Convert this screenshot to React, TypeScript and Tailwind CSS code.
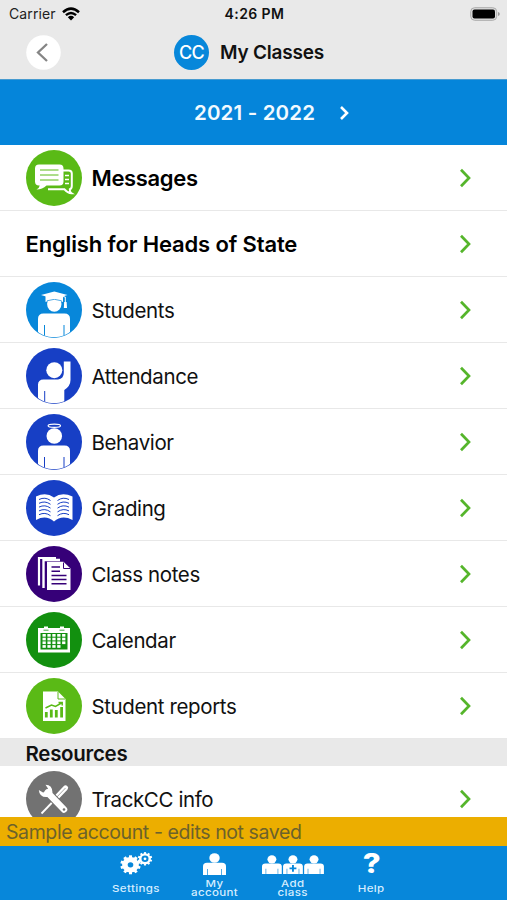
import type { ReactNode } from "react";

function Disc({ id, color, children }: { id: string; color: string; children: ReactNode }) {
  return (
    <svg viewBox="0 0 56 56" className="mt-[1.5px] h-[56px] w-[56px] shrink-0">
      <defs>
        <clipPath id={id}>
          <circle cx="28" cy="28" r="27.2" />
        </clipPath>
      </defs>
      <circle cx="28" cy="28" r="28" fill={color} />
      <g clipPath={`url(#${id})`}>{children}</g>
    </svg>
  );
}

function Torso({ color }: { color: string }) {
  return (
    <>
      <path d="M12 57V37Q12 31.5 17.5 31.5H38.5Q44 31.5 44 37V57Z" fill="#fff" />
      <path d="M18.5 43V57M38 43V57" stroke={color} strokeWidth="1" />
    </>
  );
}

const MessagesIcon = () => (
  <Disc id="messages" color="#5aba16">
    <path d="M37 20.5H42.5Q45.8 20.5 45.8 23.5V36Q45.8 38.7 43.8 39.3Q43.5 41.8 45.5 43.2Q41.5 43 38.5 39.3H22" fill="none" stroke="#fff" strokeWidth="2" />
    <path d="M39 25.5H43M39 29.5H43M39 33.5H43" stroke="#fff" strokeWidth="1.6" />
    <path d="M13 14.5H33.5Q37.5 14.5 37.5 18.5V31.5Q37.5 35.5 33.5 35.5H20.5Q16.5 39.5 10.5 39.5Q13.5 37.8 13.7 35.5H13Q9 35.5 9 31.5V18.5Q9 14.5 13 14.5Z" fill="#fff" />
    <path d="M14 20H32.5M14 25H32.5M14 30H32.5" stroke="#5aba16" strokeWidth="1" />
  </Disc>
);

const StudentsIcon = () => (
  <Disc id="students" color="#0787da">
    <Torso color="#0787da" />
    <ellipse cx="28.3" cy="22" rx="7.2" ry="7.8" fill="#fff" />
    <path d="M19.5 14V20Q28.3 15.5 37 20V14Z" fill="#fff" />
    <path d="M21 18.8Q28.3 15.8 35.7 18.8" fill="none" stroke="#0787da" strokeWidth=".7" />
    <path d="M15 13L28.3 9.5L41.5 13L28.3 17Z" fill="#fff" />
    <path d="M30 13L39.3 15V25" fill="none" stroke="#fff" strokeWidth="1" />
    <path d="M38.2 20H40.6L41 26H37.8Z" fill="#fff" />
  </Disc>
);

const AttendanceIcon = () => (
  <Disc id="attendance" color="#173fc5">
    <circle cx="28.3" cy="22.2" r="8" fill="#fff" />
    <path d="M12 57V37Q12 31.5 17.5 31.5H32Q37.8 30.5 37.8 25V13.5H44.5V32Q44.5 38 38.3 42V57Z" fill="#fff" />
    <path d="M18.7 43V57" stroke="#173fc5" strokeWidth="1" />
  </Disc>
);

const BehaviorIcon = () => (
  <Disc id="behavior" color="#173fc5">
    <ellipse cx="28.3" cy="11.8" rx="6.2" ry="1.6" fill="none" stroke="#fff" strokeWidth="1.2" />
    <circle cx="28.3" cy="22" r="7.8" fill="#fff" />
    <Torso color="#173fc5" />
  </Disc>
);

const GradingIcon = () => (
  <Disc id="grading" color="#173fc5">
    <path d="M10 16.5Q20 11.5 28 17.5Q36 11.5 46.5 16.5V40Q36 34.5 28 41.5Q20 34.5 10 40Z" fill="#fff" />
    {[19, 22.8, 26.6, 30.4, 34.2].map((y) => (
      <g key={y} transform={`translate(0 ${y})`} fill="none" stroke="#173fc5" strokeWidth="1">
        <path d="M13 .5Q19 -2.5 24.5 1.5" />
        <path d="M31.5 1.5Q37 -2.5 43 .5" />
      </g>
    ))}
  </Disc>
);

const NotesIcon = () => (
  <Disc id="notes" color="#360078">
    <path d="M13 39.5V12H30" fill="none" stroke="#fff" strokeWidth="2.2" />
    <path d="M17.5 42V14H34" fill="none" stroke="#fff" strokeWidth="2.4" />
    <path d="M21 15.8H37.5L44.5 22.5V44H21Z" fill="#fff" />
    <path d="M37.5 16.5V22.5H44" fill="none" stroke="#360078" strokeWidth="1" />
    <path d="M25.5 21H34M25.5 25.2H34M25.5 29.4H40.5M25.5 33.6H40.5M25.5 37.8H40.5" stroke="#360078" strokeWidth="1.5" />
  </Disc>
);

const CalendarIcon = () => (
  <Disc id="calendar" color="#12900f">
    <path d="M12 16H44V40.5H12Z" fill="#fff" />
    <path d="M14.5 21H41.5V37.5H14.5Z" fill="#12900f" />
    <path d="M18 14.5H22V17.5H18ZM34 14.5H38V17.5H34Z" fill="#fff" />
    <path d="M17.5 18.2H22.5M33.5 18.2H38.5" stroke="#12900f" strokeWidth=".8" />
    {[22, 25.7, 29.4, 33.1].map((y, r) =>
      [16.5, 21.4, 26.3, 31.2, 36.1].map((x, c) =>
        r === 3 && c === 4 ? null : <rect key={`${x}-${y}`} x={x} y={y} width="3.3" height="2.7" fill="#fff" />,
      ),
    )}
  </Disc>
);

const ReportsIcon = () => (
  <Disc id="reports" color="#5aba16">
    <path d="M17 13.5H32L39.5 21V43H17Z" fill="#fff" />
    <path d="M32 14V21H39" fill="none" stroke="#5aba16" strokeWidth="1" />
    <path d="M20.3 39.5V34M25.3 39.5V31.5M30.3 39.5V32M35.6 39.5V29" stroke="#5aba16" strokeWidth="2.8" />
    <path d="M19.5 30L25.5 27L29.5 28.5L35.5 25M32.5 24.5H36.2V27.5" fill="none" stroke="#5aba16" strokeWidth="1.5" />
  </Disc>
);

const ToolsIcon = () => (
  <Disc id="tools" color="#727272">
    <path d="M15.5 42.5L30 27.5" stroke="#fff" strokeWidth="1.8" />
    <path d="M29.5 27.5L39.5 17" stroke="#fff" strokeWidth="5.2" strokeLinecap="round" />
    <path d="M29.5 27.5L39.5 17" stroke="#a5a5a5" strokeWidth="1" />
    <path d="M21.5 21.5L38 38.5" stroke="#727272" strokeWidth="8.5" />
    <path d="M21.5 21.5L38 38.5" stroke="#fff" strokeWidth="6.5" strokeLinecap="round" />
    <path d="M12.8 19Q13.5 27 22 26L26.5 21.5Q26.5 14 19.5 13.7L22 17.5L20.5 20.5L17 21.5Z" fill="#fff" />
    <circle cx="38" cy="38.5" r="1.3" fill="#727272" />
  </Disc>
);

function Chevron() {
  return (
    <svg viewBox="0 0 14 20" className="mr-[35px] ml-auto h-5 w-3.5 shrink-0">
      <path d="M3 1.7L11 10L3 18.3" fill="none" stroke="#55b52b" strokeWidth="2.7" />
    </svg>
  );
}

function Row({ icon, label, bold }: { icon?: ReactNode; label: string; bold?: boolean }) {
  return (
    <div className="flex h-[66px] shrink-0 items-center border-b border-[#e8e8e8] pl-[25.5px]">
      {icon}
      <span
        className={
          bold
            ? `${icon ? "ml-2.5 tracking-[-0.35px]" : "tracking-[-0.14px]"} pt-0.5 text-[22px] font-semibold text-black`
            : "ml-2.5 pt-[3px] text-[20.5px] tracking-[-0.38px] text-[#111]"
        }
      >
        {label}
      </span>
      <Chevron />
    </div>
  );
}

function Person({ x = 0 }: { x?: number }) {
  return (
    <g transform={`translate(${x} 0)`}>
      <ellipse cx="11.5" cy="5" rx="5.2" ry="4.8" fill="#fff" />
      <path d="M0 22V13.5Q0 9.8 4 9.8H19Q23 9.8 23 13.5V22Z" fill="#fff" />
      <path d="M4.5 16V22M18.5 16V22" stroke="#0787da" strokeWidth=".7" />
    </g>
  );
}

function Gear({ x, y, r, hole }: { x: number; y: number; r: number; hole: number }) {
  return (
    <g transform={`translate(${x} ${y}) scale(1 .93)`}>
      <circle r={r * 0.82} fill="#fff" />
      {[0, 36, 72, 108, 144, 180, 216, 252, 288, 324].map((a) => (
        <rect key={a} x={-r * 0.15} y={-r} width={r * 0.3} height={r * 0.35} fill="#fff" transform={`rotate(${a})`} />
      ))}
      <circle r={hole} fill="#0787da" />
    </g>
  );
}

function Tab({ label, children, className }: { label: string[]; children: ReactNode; className: string }) {
  return (
    <div className={`flex h-full shrink-0 flex-col items-center pt-1.5 ${className}`}>
      <div className="flex h-6 items-start justify-center">{children}</div>
      <div className="flex h-6 flex-col items-center justify-center">
        {label.map((l) => (
          <span key={l} className="h-[9px] scale-x-[1.2] text-[9.6px] leading-[9px] font-medium tracking-[0.3px] whitespace-nowrap text-[#d5edff]">
            {l}
          </span>
        ))}
      </div>
    </div>
  );
}

export default function App() {
  return (
    <div className="flex h-[900px] w-[507px] flex-col overflow-hidden bg-white font-['Inter','Liberation_Sans',sans-serif]">
      <header className="h-[79px] shrink-0 bg-[#e9e9e9]">
        <div className="grid h-[27px] grid-cols-3 items-center pr-[7px] pl-[9px]">
          <div className="flex items-center gap-1.5">
            <span className="text-[14px] tracking-[0.1px] text-[#222]">Carrier</span>
            <svg viewBox="0 0 18 14" className="h-3.5 w-[18px]">
              <path d="M1 5.2Q9 -2 17 5.2" fill="none" stroke="#000" strokeWidth="2.5" />
              <path d="M3.9 8.2Q9 3.7 14.1 8.2" fill="none" stroke="#000" strokeWidth="2.4" />
              <path d="M9 13.5L5.8 10.2Q9 7.5 12.2 10.2Z" fill="#000" />
            </svg>
          </div>
          <span className="text-center text-[14px] font-semibold tracking-[0.4px] text-[#111]">4:26 PM</span>
          <svg viewBox="0 0 30 14" className="h-3.5 w-[30px] justify-self-end">
            <rect x=".7" y=".7" width="26" height="12.6" rx="4" fill="#ddd" stroke="#aaa" strokeWidth="1" />
            <rect x="2.5" y="2.5" width="22.5" height="9" rx="2" fill="#000" />
            <path d="M28 5Q29.8 5.5 29.8 7Q29.8 8.5 28 9Z" fill="#999" />
          </svg>
        </div>
        <div className="flex h-[50px] items-center pl-[26px]">
          <svg viewBox="0 0 35 35" className="h-[35px] w-[35px]">
            <circle cx="17.5" cy="17.5" r="17.3" fill="#fff" />
            <path d="M21 9L12 17.5L21 26" fill="none" stroke="#858585" strokeWidth="2.3" />
          </svg>
          <div className="ml-[113px] flex h-[35px] w-[35px] items-center justify-center rounded-full bg-[#0787da]">
            <span className="text-[18px] font-medium tracking-[-0.8px] text-white">CC</span>
          </div>
          <h1 className="ml-[11px] pt-0.5 text-[19px] font-semibold tracking-[-0.2px] text-[#111]">My Classes</h1>
        </div>
      </header>

      <div className="flex h-[66px] shrink-0 items-center border-t border-[#479bd0] bg-[#0585da] pl-[194px]">
        <span className="w-[121px] pt-px text-[20.5px] font-semibold tracking-[0.15px] whitespace-nowrap text-[#f2faff]">2021 - 2022</span>
        <svg viewBox="0 0 10 14" className="ml-6 h-3.5 w-2.5">
          <path d="M2 1L8 7L2 13" fill="none" stroke="#fff" strokeWidth="2.6" />
        </svg>
      </div>

      <main className="flex min-h-0 flex-1 flex-col overflow-hidden">
        <Row icon={<MessagesIcon />} label="Messages" bold />
        <Row label="English for Heads of State" bold />
        <Row icon={<StudentsIcon />} label="Students" />
        <Row icon={<AttendanceIcon />} label="Attendance" />
        <Row icon={<BehaviorIcon />} label="Behavior" />
        <Row icon={<GradingIcon />} label="Grading" />
        <Row icon={<NotesIcon />} label="Class notes" />
        <Row icon={<CalendarIcon />} label="Calendar" />
        <Row icon={<ReportsIcon />} label="Student reports" />
        <div className="flex h-[27px] shrink-0 items-center bg-[#e9e9e9] pt-[3px] pl-[25.5px] text-[20.5px] font-semibold tracking-[-0.3px] text-[#111]">
          Resources
        </div>
        <Row icon={<ToolsIcon />} label="TrackCC info" />
      </main>

      <div className="flex h-[29px] shrink-0 items-center bg-[#ecae00] pt-0.5 pl-1.5 text-[19.5px] tracking-[-0.4px] text-[#6c622b]">
        Sample account - edits not saved
      </div>

      <footer className="flex h-[54px] shrink-0 bg-[#0787da] pl-[97px]">
        <Tab label={["Settings"]} className="w-[78px]">
          <svg viewBox="0 0 34 24" className="h-6 w-[34px]">
            <Gear x={11.5} y={12.8} r={10.2} hole={2.8} />
            <Gear x={26} y={6.8} r={7.2} hole={3.5} />
            <circle cx="26" cy="6.8" r="1.4" fill="#fff" />
          </svg>
        </Tab>
        <Tab label={["My", "account"]} className="w-[79px]">
          <svg viewBox="0 0 23 24" className="mt-px h-6 w-[23px]">
            <Person />
          </svg>
        </Tab>
        <Tab label={["Add", "class"]} className="w-[78px]">
          <svg viewBox="0 0 62 24" className="h-6 w-[62px]">
            <g transform="translate(0 3) scale(.86)">
              <Person />
              <Person x={24.5} />
              <Person x={49} />
              <path d="M36 11.5V19.5M32 15.5H40" stroke="#0787da" strokeWidth="2.2" />
            </g>
          </svg>
        </Tab>
        <Tab label={["Help"]} className="w-[79px]">
          <span className="scale-x-[1.15] text-[27px] leading-[24px] font-extrabold text-white">?</span>
        </Tab>
      </footer>
    </div>
  );
}
